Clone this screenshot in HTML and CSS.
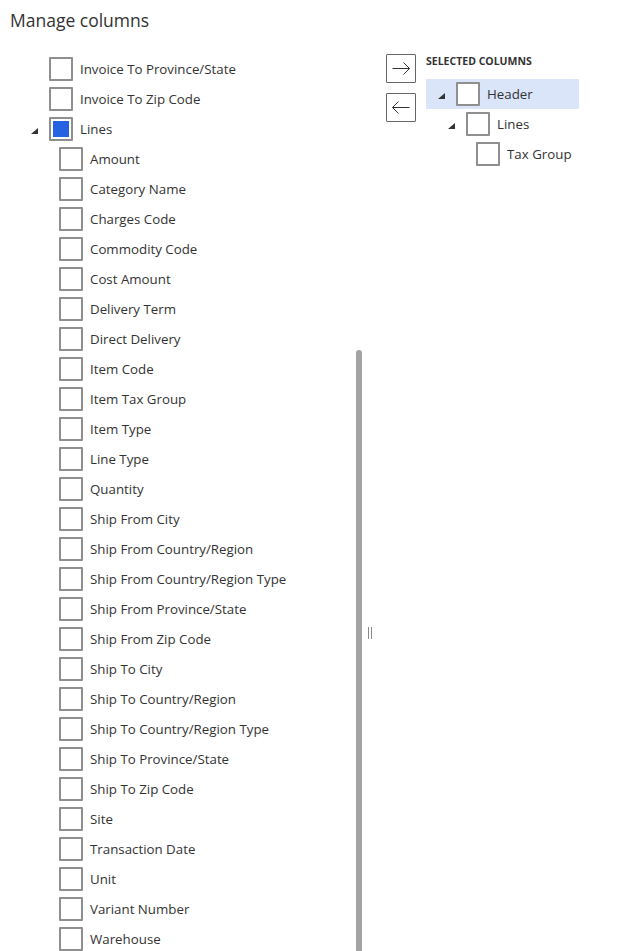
FILE: index.html
```html
<!DOCTYPE html>
<html>
<head>
<meta charset="utf-8">
<link rel="stylesheet" href="styles.css">
</head>
<body>
<div class="page">
  <h1 class="title">Manage columns</h1>
  <div class="main">
    <div class="available">
      <div class="row l0"><span class="caret empty"></span><span class="cb"></span><span class="label">Invoice To Province/State</span></div>
      <div class="row l0"><span class="caret empty"></span><span class="cb"></span><span class="label">Invoice To Zip Code</span></div>
      <div class="row l0"><span class="caret"></span><span class="cb checked"></span><span class="label">Lines</span></div>
      <div class="row l1"><span class="caret empty"></span><span class="cb"></span><span class="label">Amount</span></div>
      <div class="row l1"><span class="caret empty"></span><span class="cb"></span><span class="label">Category Name</span></div>
      <div class="row l1"><span class="caret empty"></span><span class="cb"></span><span class="label">Charges Code</span></div>
      <div class="row l1"><span class="caret empty"></span><span class="cb"></span><span class="label">Commodity Code</span></div>
      <div class="row l1"><span class="caret empty"></span><span class="cb"></span><span class="label">Cost Amount</span></div>
      <div class="row l1"><span class="caret empty"></span><span class="cb"></span><span class="label">Delivery Term</span></div>
      <div class="row l1"><span class="caret empty"></span><span class="cb"></span><span class="label">Direct Delivery</span></div>
      <div class="row l1"><span class="caret empty"></span><span class="cb"></span><span class="label">Item Code</span></div>
      <div class="row l1"><span class="caret empty"></span><span class="cb"></span><span class="label">Item Tax Group</span></div>
      <div class="row l1"><span class="caret empty"></span><span class="cb"></span><span class="label">Item Type</span></div>
      <div class="row l1"><span class="caret empty"></span><span class="cb"></span><span class="label">Line Type</span></div>
      <div class="row l1"><span class="caret empty"></span><span class="cb"></span><span class="label">Quantity</span></div>
      <div class="row l1"><span class="caret empty"></span><span class="cb"></span><span class="label">Ship From City</span></div>
      <div class="row l1"><span class="caret empty"></span><span class="cb"></span><span class="label">Ship From Country/Region</span></div>
      <div class="row l1"><span class="caret empty"></span><span class="cb"></span><span class="label">Ship From Country/Region Type</span></div>
      <div class="row l1"><span class="caret empty"></span><span class="cb"></span><span class="label">Ship From Province/State</span></div>
      <div class="row l1"><span class="caret empty"></span><span class="cb"></span><span class="label">Ship From Zip Code</span></div>
      <div class="row l1"><span class="caret empty"></span><span class="cb"></span><span class="label">Ship To City</span></div>
      <div class="row l1"><span class="caret empty"></span><span class="cb"></span><span class="label">Ship To Country/Region</span></div>
      <div class="row l1"><span class="caret empty"></span><span class="cb"></span><span class="label">Ship To Country/Region Type</span></div>
      <div class="row l1"><span class="caret empty"></span><span class="cb"></span><span class="label">Ship To Province/State</span></div>
      <div class="row l1"><span class="caret empty"></span><span class="cb"></span><span class="label">Ship To Zip Code</span></div>
      <div class="row l1"><span class="caret empty"></span><span class="cb"></span><span class="label">Site</span></div>
      <div class="row l1"><span class="caret empty"></span><span class="cb"></span><span class="label">Transaction Date</span></div>
      <div class="row l1"><span class="caret empty"></span><span class="cb"></span><span class="label">Unit</span></div>
      <div class="row l1"><span class="caret empty"></span><span class="cb"></span><span class="label">Variant Number</span></div>
      <div class="row l1"><span class="caret empty"></span><span class="cb"></span><span class="label">Warehouse</span></div>
    </div>
    <div class="scrollbar"><div class="thumb"></div></div>
    <div class="splitter"><div class="grip"></div></div>
    <div class="buttons">
      <button class="move" aria-label="Add">
        <svg width="30" height="29" viewBox="0 0 30 29"><path d="M6.5 14.5H23.5M17.5 8.5L23.5 14.5L17.5 20.5" fill="none" stroke="#333" stroke-width="1"/></svg>
      </button>
      <button class="move" aria-label="Remove">
        <svg width="30" height="29" viewBox="0 0 30 29"><path d="M23.5 14.5H6.5M12.5 8.5L6.5 14.5L12.5 20.5" fill="none" stroke="#333" stroke-width="1"/></svg>
      </button>
    </div>
    <div class="selected">
      <div class="sel-heading">SELECTED COLUMNS</div>
      <div class="row r0 active"><span class="caret"></span><span class="cb"></span><span class="label">Header</span></div>
      <div class="row r1"><span class="caret"></span><span class="cb"></span><span class="label">Lines</span></div>
      <div class="row r2"><span class="caret empty"></span><span class="cb"></span><span class="label">Tax Group</span></div>
    </div>
  </div>
</div>
</body>
</html>
```

FILE: styles.css
```css
html, body {
  margin: 0;
  padding: 0;
  height: 951px;
  overflow: hidden;
  background: #fff;
}
body {
  font-family: "Open Sans", "Noto Sans", sans-serif;
  color: #333;
}
.page {
  display: flex;
  flex-direction: column;
  height: 951px;
}
.title {
  margin: 0;
  padding: 8px 0 21px 10px;
  font-size: 17.5px;
  line-height: 24px;
  font-weight: 400;
  color: #333;
}
.main {
  display: flex;
  flex: 1;
  min-height: 0;
}
.available {
  width: 356px;
  display: flex;
  flex-direction: column;
  padding-top: 1px;
}
.row {
  display: flex;
  align-items: center;
  height: 30px;
  flex-shrink: 0;
  font-size: 13.3px;
}
.row.l0 { padding-left: 31px; }
.row.l1 { padding-left: 41px; }
.caret {
  width: 0;
  height: 0;
  border-left: 7px solid transparent;
  border-bottom: 6px solid #333;
  margin-right: 11px;
  margin-top: 3px;
}
.caret.empty {
  border-bottom-color: transparent;
}
.cb {
  width: 24px;
  height: 24px;
  box-sizing: border-box;
  border: 2px solid #8f8f8f;
  border-radius: 1px;
  background: #fff;
  margin-right: 7px;
  padding: 2px;
}
.cb.checked::after {
  content: "";
  display: block;
  width: 100%;
  height: 100%;
  background: #2563e3;
}
.label {
  white-space: nowrap;
  color: #333;
}
.scrollbar {
  width: 6px;
  display: flex;
  flex-direction: column;
}
.thumb {
  margin-top: 297px;
  flex: 1;
  background: #a3a3a3;
  border-radius: 3px 3px 0 0;
}
.splitter {
  width: 24px;
  display: flex;
  flex-direction: column;
}
.grip {
  margin-top: 574px;
  margin-left: 6px;
  width: 4px;
  height: 12px;
  box-sizing: border-box;
  border-left: 1px solid #8a8a8a;
  border-right: 1px solid #8a8a8a;
}
.buttons {
  width: 30px;
  display: flex;
  flex-direction: column;
  gap: 10px;
  padding-top: 1px;
  margin-right: 10px;
}
.move {
  width: 30px;
  height: 29px;
  padding: 0;
  margin: 0;
  box-sizing: border-box;
  border: 1px solid #666;
  border-radius: 1px;
  background: #fff;
  display: flex;
  align-items: center;
  justify-content: center;
}
.move svg {
  display: block;
  margin: -1px;
}
.selected {
  width: 153px;
  display: flex;
  flex-direction: column;
}
.sel-heading {
  font-size: 10.5px;
  font-weight: 700;
  line-height: 16px;
  color: #333;
  margin-bottom: 10px;
  white-space: nowrap;
}
.row.r0 { padding-left: 12px; }
.row.r1 { padding-left: 22px; }
.row.r2 { padding-left: 32px; }
.row.active {
  background: #dae5fa;
}
```
